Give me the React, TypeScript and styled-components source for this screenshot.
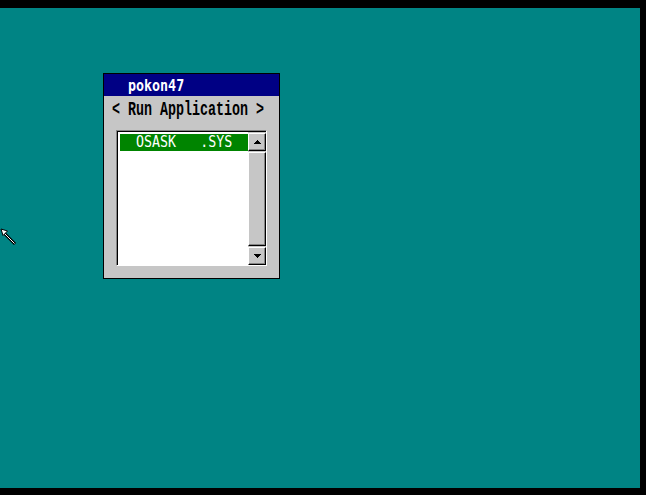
import React from "react";
import styled, { createGlobalStyle } from "styled-components";

const GlobalStyle = createGlobalStyle`
  html, body { margin: 0; padding: 0; background: #000; }
  body { font-family: "DejaVu Sans Mono", monospace; }
`;

const Screen = styled.div`
  width: 646px;
  height: 495px;
  background: #000;
  padding-top: 8px;
  box-sizing: border-box;
`;

const Desktop = styled.div`
  position: relative;
  width: 640px;
  height: 480px;
  background: #008484;
  overflow: hidden;
`;

const Window = styled.div`
  position: absolute;
  left: 103px;
  top: 65px;
  width: 177px;
  height: 206px;
  box-sizing: border-box;
  border: 1px solid #000;
  background: #c6c6c6;
  display: flex;
  flex-direction: column;
`;

const TitleBar = styled.div`
  height: 22px;
  flex: none;
  background: #000084;
  color: #fff;
  padding: 4px 0 0 24px;
  box-sizing: border-box;
  font-family: "DejaVu Sans Mono", monospace;
  font-size: 13.33px;
  font-weight: bold;
  line-height: 16px;
`;

const Glyphs = styled.span<{ $stretch?: number }>`
  display: inline-block;
  white-space: pre;
  transform: scaleY(${(p) => p.$stretch ?? 1.2});
  transform-origin: 50% 50%;
`;

const Body = styled.div`
  flex: 1;
  padding: 7px 0 0 8px;
  display: flex;
  flex-direction: column;
`;

const Heading = styled.div`
  font-family: "Liberation Mono", "Courier New", monospace;
  font-weight: bold;
  font-size: 13.33px;
  line-height: 16px;
  color: #000;
  height: 16px;
`;

const ListFrame = styled.div`
  margin: 11px 0 0 4px;
  width: 151px;
  height: 136px;
  box-sizing: border-box;
  border-top: 1px solid #848484;
  border-left: 1px solid #848484;
  border-bottom: 1px solid #fff;
  border-right: 1px solid #fff;
`;

const ListInner = styled.div`
  height: 100%;
  box-sizing: border-box;
  border-top: 1px solid #000;
  border-left: 1px solid #000;
  display: flex;
`;

const Items = styled.div`
  flex: 1;
  background: #fff;
  padding: 2px 0 0 2px;
`;

const Item = styled.div<{ $selected?: boolean }>`
  height: 17px;
  background: ${(p) => (p.$selected ? "#008400" : "transparent")};
  color: ${(p) => (p.$selected ? "#fff" : "#000")};
  font-size: 13.33px;
  line-height: 16px;
  padding-left: 16px;
`;

const Scrollbar = styled.div`
  width: 18px;
  flex: none;
  display: flex;
  flex-direction: column;
  gap: 1px;
  background: #c6c6c6;
  padding-top: 1px;
`;

const Raised = styled.div<{ $grow?: boolean }>`
  height: ${(p) => (p.$grow ? "auto" : "18px")};
  flex: ${(p) => (p.$grow ? "1" : "none")};
  box-sizing: border-box;
  background: #c6c6c6;
  border-top: 1px solid #fff;
  border-left: 1px solid #fff;
  border-bottom: 1px solid #000;
  border-right: 1px solid #000;
  box-shadow: inset -1px -1px 0 #848484;
  display: flex;
  align-items: center;
  justify-content: center;
`;

const ArrowIcon = ({ dir }: { dir: "up" | "down" }) => (
  <svg width="7" height="4" viewBox="0 0 7 4" shapeRendering="crispEdges">
    {dir === "up" ? (
      <>
        <rect x="3" y="0" width="1" height="1" fill="#000" />
        <rect x="2" y="1" width="3" height="1" fill="#000" />
        <rect x="1" y="2" width="5" height="1" fill="#000" />
        <rect x="0" y="3" width="7" height="1" fill="#000" />
      </>
    ) : (
      <>
        <rect x="0" y="0" width="7" height="1" fill="#000" />
        <rect x="1" y="1" width="5" height="1" fill="#000" />
        <rect x="2" y="2" width="3" height="1" fill="#000" />
        <rect x="3" y="3" width="1" height="1" fill="#000" />
      </>
    )}
  </svg>
);

const Pointer = styled.svg`
  position: absolute;
  left: 0;
  top: 220px;
`;

export default function App() {
  return (
    <>
      <GlobalStyle />
      <Screen>
        <Desktop>
          <Window>
            <TitleBar>
              <Glyphs $stretch={1.25}>pokon47</Glyphs>
            </TitleBar>
            <Body>
              <Heading>
                <Glyphs $stretch={1.45}>{"< Run Application >"}</Glyphs>
              </Heading>
              <ListFrame>
                <ListInner>
                  <Items>
                    <Item $selected>
                      <Glyphs>{"OSASK   .SYS"}</Glyphs>
                    </Item>
                  </Items>
                  <Scrollbar>
                    <Raised>
                      <ArrowIcon dir="up" />
                    </Raised>
                    <Raised $grow />
                    <Raised>
                      <ArrowIcon dir="down" />
                    </Raised>
                  </Scrollbar>
                </ListInner>
              </ListFrame>
            </Body>
          </Window>
          <Pointer width="18" height="20" viewBox="0 0 18 20">
            <line x1="3" y1="4" x2="15" y2="16" stroke="#000" strokeWidth="3" />
            <line x1="3" y1="4" x2="14.5" y2="15.5" stroke="#fff" strokeWidth="1" />
            <polygon points="1,1 7.5,3 3,7.5" fill="#fff" stroke="#000" strokeWidth="1" />
          </Pointer>
        </Desktop>
      </Screen>
    </>
  );
}
